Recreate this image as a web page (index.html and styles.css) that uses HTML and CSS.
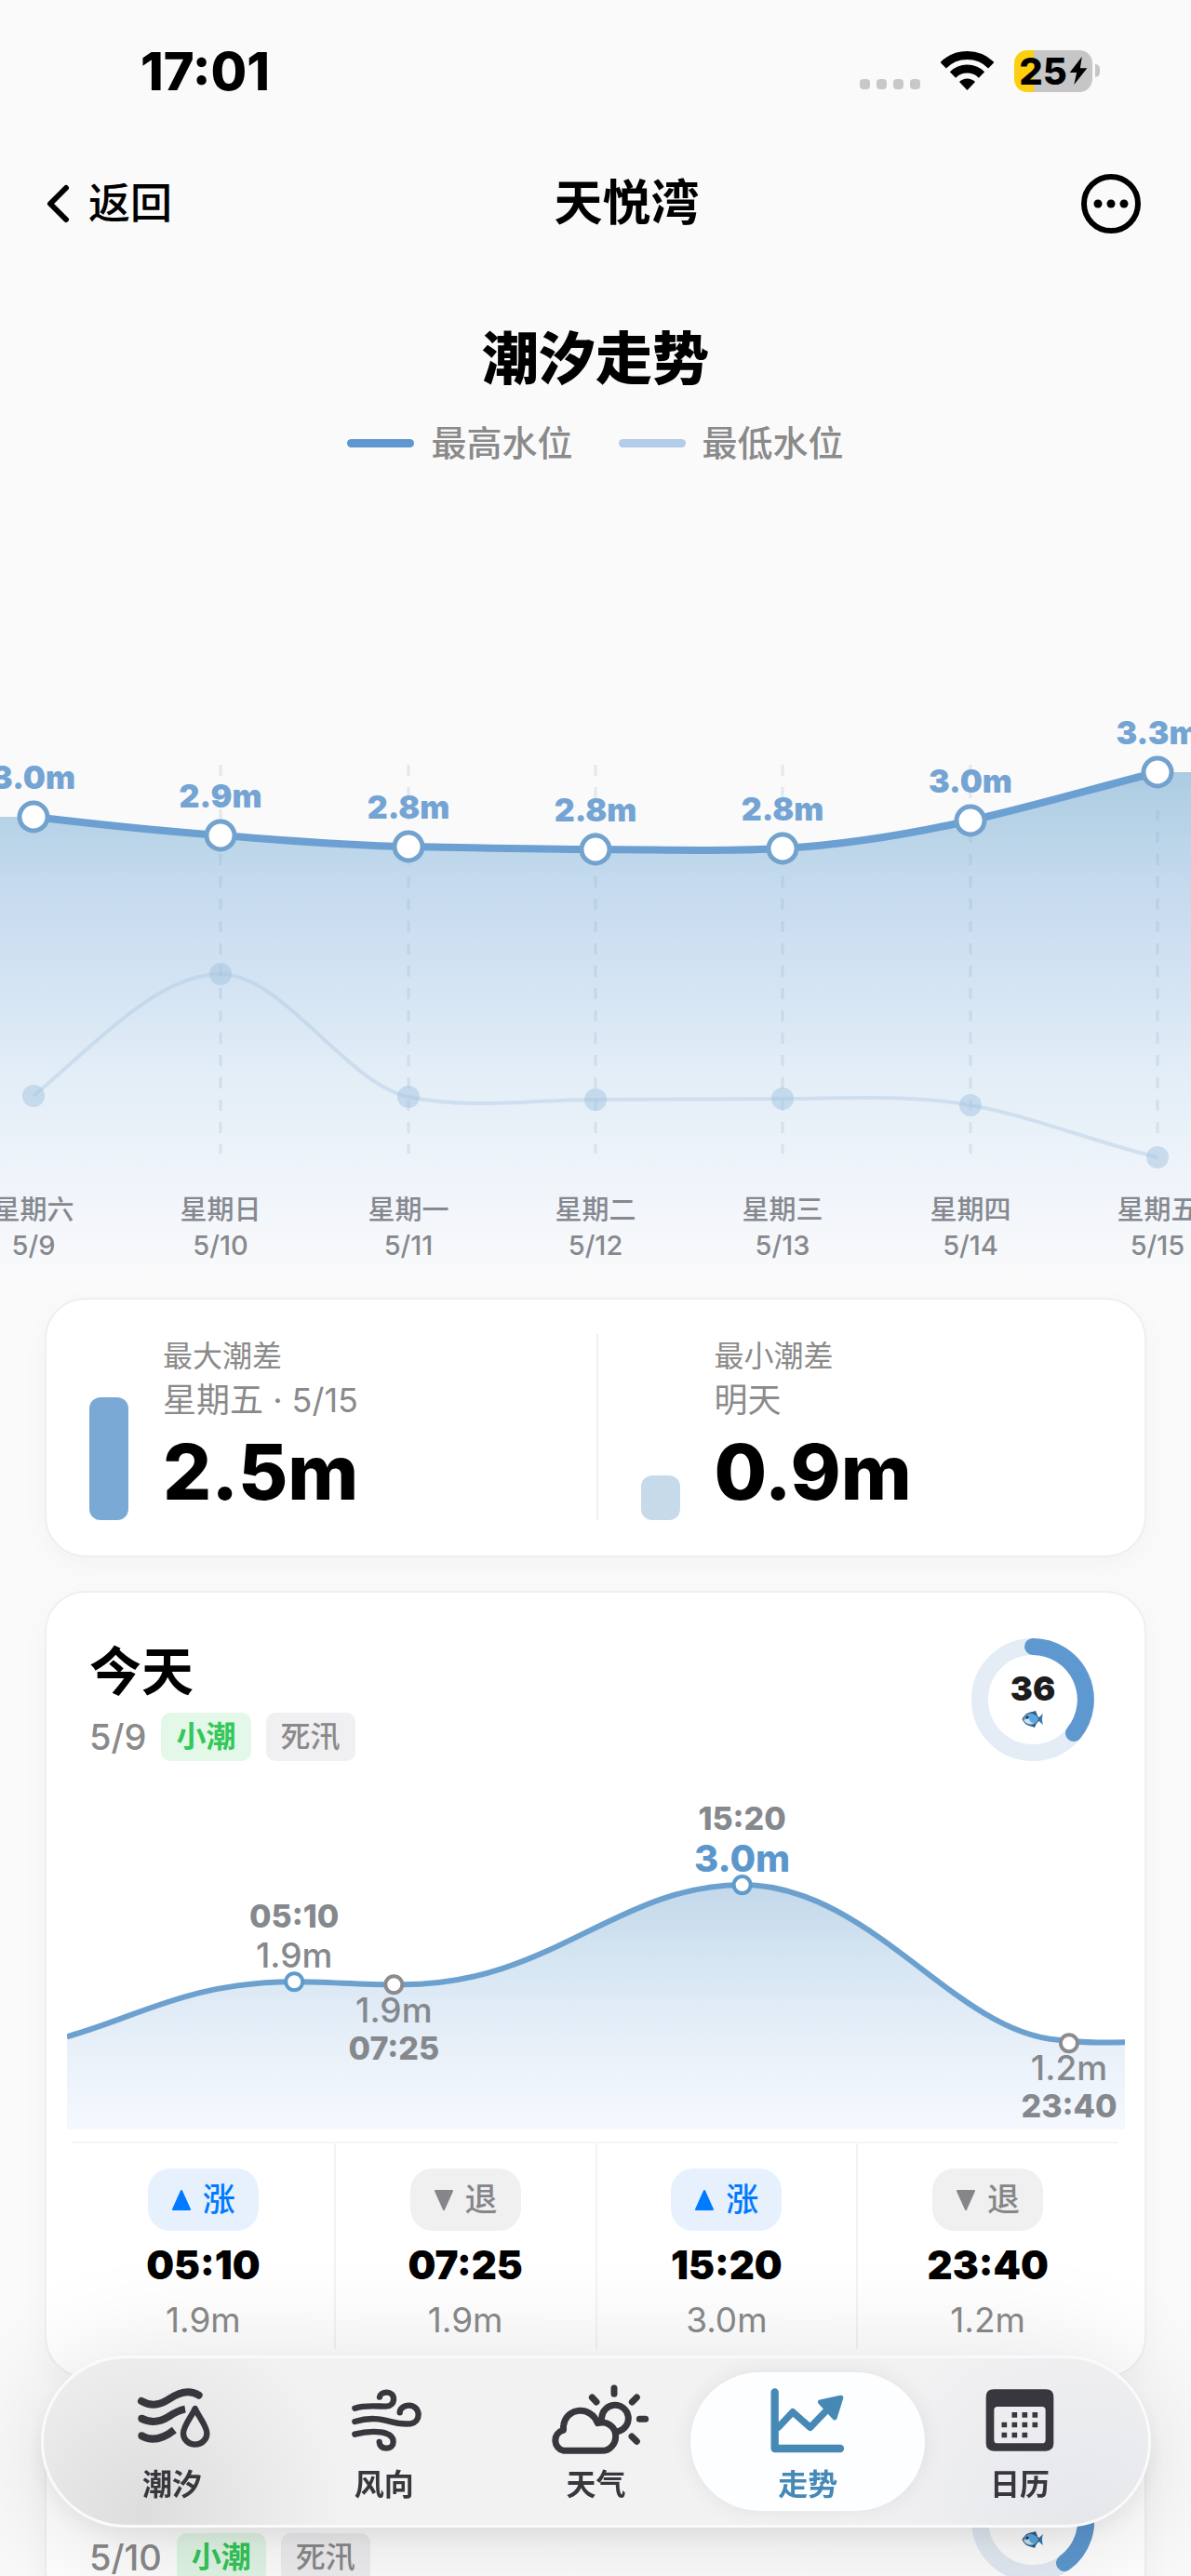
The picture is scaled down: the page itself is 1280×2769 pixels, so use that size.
FILE: index.html
```html
<!DOCTYPE html>
<html lang="zh-CN">
<head>
  <meta charset="UTF-8" />
  <meta name="viewport" content="width=device-width, initial-scale=1.0"/>
  <title>天悦湾</title>
  <link rel="stylesheet" href="styles.css">
</head>
<body>

<div class="app">
  <div class="status-bar">
    <span class="clock">17:01</span>
    <div class="status-icons">
      <span class="cell-dots"><i></i><i></i><i></i><i></i></span>
      <svg class="wifi" viewBox="0 0 57 42">
        <path d="M2.700 15.200A36.500 36.500 0 0 1 54.300 15.200M13 25.500A22 22 0 0 1 44 25.500" fill="none" stroke="#000" stroke-width="9"/>
        <path d="M28.500 42L20 33A12 12 0 0 1 37 33Z"/>
      </svg>
      <span class="battery">25<svg viewBox="0 0 20 32"><path d="M14 0L0 18h8L5 32L20 13h-8Z"/></svg></span>
    </div>
  </div>

  <header class="nav-bar">
    <a class="back" href="#">
      <svg viewBox="0 0 26 42"><path d="M22 4L5 21L22 38" fill="none" stroke="#000" stroke-width="6" stroke-linecap="round" stroke-linejoin="round"/></svg>
      返回
    </a>
    <h1>天悦湾</h1>
    <button class="more" type="button" aria-label="更多">
      <svg viewBox="0 0 64 64">
        <circle cx="32" cy="32" r="29" fill="none" stroke="#000" stroke-width="6"/>
        <circle cx="18" cy="32" r="4.500"/><circle cx="32" cy="32" r="4.500"/><circle cx="46" cy="32" r="4.500"/>
      </svg>
    </button>
  </header>

  <main>
    <section class="trend">
      <h2>潮汐走势</h2>
      <div class="legend">
        <span class="key high">最高水位</span>
        <span class="key low">最低水位</span>
      </div>
      <svg class="trend-chart" viewBox="0 501 1280 874">
        <defs>
          <linearGradient id="sea" gradientUnits="userSpaceOnUse" x1="0" y1="830" x2="0" y2="1375">
            <stop offset="0" stop-color="#acccE3"/>
            <stop offset="0.120" stop-color="#b9d4e8"/>
            <stop offset="0.220" stop-color="#c5daee"/>
            <stop offset="0.420" stop-color="#d4e4f3"/>
            <stop offset="0.600" stop-color="#e3eef7"/>
            <stop offset="0.800" stop-color="#eff4fa"/>
            <stop offset="1" stop-color="#fafafb"/>
          </linearGradient>
        </defs>
        <path fill="url(#sea)" d="M0 878H36C103 886 170 893 237 898S372 909 439 910S573 913 640 913S774 916 841 912S976 897 1043 882S1177 847 1244 830H1280V1375H0Z"/>
        <path class="grid-line" d="M237 822V1240M439 822V1240M640 822V1240M841 822V1240M1043 822V1240M1244 870V1230"/>
        <path class="low-line" d="M36 1178C103 1122 170 1047 237 1047S372 1165 439 1179S573 1182 640 1182S774 1181 841 1181S976 1176 1043 1188S1177 1228 1244 1244"/>
        <g class="low-dots">
          <circle cx="36" cy="1178" r="12"/><circle cx="237" cy="1047" r="12"/><circle cx="439" cy="1179" r="12"/><circle cx="640" cy="1182" r="12"/><circle cx="841" cy="1181" r="12"/><circle cx="1043" cy="1188" r="12"/><circle cx="1244" cy="1244" r="12"/>
        </g>
        <path class="high-line" d="M36 878C103 886 170 893 237 898S372 909 439 910S573 913 640 913S774 916 841 912S976 897 1043 882S1177 847 1244 830"/>
        <g class="high-dots">
          <circle cx="36" cy="878" r="15"/><circle cx="237" cy="898" r="15"/><circle cx="439" cy="910" r="15"/><circle cx="640" cy="913" r="15"/><circle cx="841" cy="912" r="15"/><circle cx="1043" cy="882" r="15"/><circle cx="1244" cy="830" r="15"/>
        </g>
        <g class="high-text">
          <text x="36" y="848">3.0m</text><text x="237" y="868">2.9m</text><text x="439" y="880">2.8m</text><text x="640" y="883">2.8m</text><text x="841" y="882">2.8m</text><text x="1043" y="852">3.0m</text><text x="1244" y="800">3.3m</text>
        </g>
        <g class="day-text">
          <text x="36" y="1311">星期六</text><text x="237" y="1311">星期日</text><text x="439" y="1311">星期一</text><text x="640" y="1311">星期二</text><text x="841" y="1311">星期三</text><text x="1043" y="1311">星期四</text><text x="1244" y="1311">星期五</text>
          <text x="36" y="1349">5/9</text><text x="237" y="1349">5/10</text><text x="439" y="1349">5/11</text><text x="640" y="1349">5/12</text><text x="841" y="1349">5/13</text><text x="1043" y="1349">5/14</text><text x="1244" y="1349">5/15</text>
        </g>
      </svg>
    </section>

    <section class="card range">
      <div class="range-item">
        <span class="bar max"></span>
        <div class="range-text">
          <p class="range-label">最大潮差</p>
          <p class="range-day">星期五 · 5/15</p>
          <p class="range-value">2.5m</p>
        </div>
      </div>
      <div class="range-item">
        <span class="bar min"></span>
        <div class="range-text">
          <p class="range-label">最小潮差</p>
          <p class="range-day">明天</p>
          <p class="range-value">0.9m</p>
        </div>
      </div>
    </section>

    <section class="card day">
      <div class="day-head">
        <div>
          <h3>今天</h3>
          <div class="day-meta">
            <span class="date">5/9</span>
            <span class="tag green">小潮</span>
            <span class="tag">死汛</span>
          </div>
        </div>
        <div class="score">
          <svg class="ring" viewBox="0 0 132 132">
            <circle cx="66" cy="66" r="57" fill="none" stroke="#e4ecf6" stroke-width="18"/>
            <path d="M66 9A57 57 0 0 1 110 102" fill="none" stroke="#5d98d0" stroke-width="18" stroke-linecap="round"/>
          </svg>
          <div class="score-text">
            <b>36</b>
            <svg class="fish" viewBox="0 0 24 20">
              <path d="M16 10L23 4Q21 10 23 16Z" fill="#3a78b5"/>
              <path d="M8 3L15 1L17 6ZM9 17L14 19L16 14Z" fill="#2f5f94"/>
              <path d="M1 10Q4 3 11 3Q17 5 19 10Q17 15 11 17Q4 17 1 10Z" fill="#5aa7dd" stroke="#33485f"/>
              <path d="M2 11Q6 17 14 14Q8 14 8 9Z" fill="#c8e3f3"/>
              <circle cx="6" cy="8" r="1.500" fill="#1f2b38"/>
            </svg>
          </div>
        </div>
      </div>

      <svg class="day-chart" viewBox="72 1894 1136 396">
        <defs>
          <linearGradient id="tide" gradientUnits="userSpaceOnUse" x1="0" y1="2027" x2="0" y2="2290">
            <stop offset="0" stop-color="#c3d8ea"/>
            <stop offset="0.400" stop-color="#dbe9f5"/>
            <stop offset="0.700" stop-color="#eaf1f9"/>
            <stop offset="1" stop-color="#f5f9ff"/>
          </linearGradient>
        </defs>
        <path fill="url(#tide)" d="M72 2190C150 2168 205 2131 316 2131C352 2131 385 2134 423 2134C590 2138 660 2027 797 2027C940 2027 1030 2196 1148 2194Q1160 2197 1208 2196V2290H72Z"/>
        <path class="tide-line" d="M72 2190C150 2168 205 2131 316 2131C352 2131 385 2134 423 2134C590 2138 660 2027 797 2027C940 2027 1030 2196 1148 2194Q1160 2197 1208 2196"/>
        <g class="rise-dots"><circle cx="316" cy="2131" r="9"/><circle cx="797" cy="2027" r="9"/></g>
        <g class="fall-dots"><circle cx="423" cy="2134" r="9"/><circle cx="1148" cy="2197" r="9"/></g>
        <g class="tide-text">
          <text class="t" x="316" y="2073">05:10</text><text x="316" y="2116">1.9m</text>
          <text x="423" y="2175">1.9m</text><text class="t" x="423" y="2215">07:25</text>
          <text class="t" x="797" y="1968">15:20</text><text class="peak" x="797" y="2013">3.0m</text>
          <text x="1148" y="2237">1.2m</text><text class="t" x="1148" y="2277">23:40</text>
        </g>
      </svg>

      <ul class="events">
        <li><span class="pill rise"><svg viewBox="0 0 22 24"><path d="M11 2L20 22H2Z"/></svg>涨</span><b>05:10</b><span class="depth">1.9m</span></li>
        <li><span class="pill"><svg viewBox="0 0 22 24"><path d="M2 2H20L11 22Z"/></svg>退</span><b>07:25</b><span class="depth">1.9m</span></li>
        <li><span class="pill rise"><svg viewBox="0 0 22 24"><path d="M11 2L20 22H2Z"/></svg>涨</span><b>15:20</b><span class="depth">3.0m</span></li>
        <li><span class="pill"><svg viewBox="0 0 22 24"><path d="M2 2H20L11 22Z"/></svg>退</span><b>23:40</b><span class="depth">1.2m</span></li>
      </ul>
    </section>

    <section class="card day">
      <div class="day-head next">
        <div class="day-meta">
          <span class="date">5/10</span>
          <span class="tag green">小潮</span>
          <span class="tag">死汛</span>
        </div>
        <div class="score">
          <svg class="ring" viewBox="0 0 132 132">
            <circle cx="66" cy="66" r="57" fill="none" stroke="#e4ecf6" stroke-width="18"/>
            <path d="M66 9A57 57 0 0 1 100 112" fill="none" stroke="#5d98d0" stroke-width="18" stroke-linecap="round"/>
          </svg>
          <div class="score-text">
            <svg class="fish" viewBox="0 0 24 20">
              <path d="M16 10L23 4Q21 10 23 16Z" fill="#3a78b5"/>
              <path d="M8 3L15 1L17 6ZM9 17L14 19L16 14Z" fill="#2f5f94"/>
              <path d="M1 10Q4 3 11 3Q17 5 19 10Q17 15 11 17Q4 17 1 10Z" fill="#5aa7dd" stroke="#33485f"/>
              <path d="M2 11Q6 17 14 14Q8 14 8 9Z" fill="#c8e3f3"/>
              <circle cx="6" cy="8" r="1.500" fill="#1f2b38"/>
            </svg>
          </div>
        </div>
      </div>
    </section>
  </main>

  <nav class="tab-bar">
    <a href="#">
      <svg viewBox="-4 45 336 240" stroke-width="24">
        <path d="M65 105C98 124 125 117 155 98C190 74 222 68 250 86" stroke-linecap="round"/>
        <path d="M65 161C98 178 125 173 153 155C172 142 188 134 206 131"/>
        <path d="M65 217C95 234 128 232 171 198"/>
        <path d="M66 161h0M66 217h0" stroke-linecap="round"/>
        <path d="M238 129C230 150 200 184 200 209A38 36 0 0 0 276 209C276 184 246 150 238 129Z" stroke-width="19" stroke-linejoin="round"/>
      </svg>
      潮汐
    </a>
    <a href="#">
      <svg viewBox="678 45 336 240" stroke-width="19" stroke-linecap="round">
        <path d="M751 128C790 116 830 123 852 122C867 121 876 112 876 98C876 86 866 77 854 77C841 77 832 84 831 92"/>
        <path d="M751 171C800 156 835 162 870 172C895 179 916 179 930 178C947 175 956 163 956 149C956 132 943 119 926 119C908 119 896 130 896 142"/>
        <path d="M751 212C795 200 835 203 852 209C867 214 875 223 875 236C875 248 866 257 853 257C839 257 831 250 830 237"/>
      </svg>
      风向
    </a>
    <a href="#">
      <svg viewBox="9 45 336 240" stroke-width="21" stroke-linecap="round">
        <path d="M197 158A43 43 0 1 1 252 202"/>
        <path d="M237 63V82M310 93L295 108M319 163H338M294 219L310 235M166 93L180 108"/>
        <path d="M75 265A34 34 0 0 1 72 199C76 198 72 191 74 183C82 125 162 118 184 176C218 168 242 190 242 218C242 245 222 265 199 265Z" stroke-linejoin="round"/>
      </svg>
      天气
    </a>
    <a href="#" class="active">
      <svg viewBox="693 45 336 240" stroke-width="25" stroke-linecap="round" stroke-linejoin="round">
        <path d="M755 76V258H966"/>
        <path d="M767 189L813 140L869 190L925 132" stroke-width="22"/>
        <path d="M902 108L968 94L948 158Z" fill="currentColor" stroke-width="16"/>
      </svg>
      走势
    </a>
    <a href="#">
      <svg viewBox="-168 45 336 240">
        <path d="M-84 67H84Q109 67 109 92V241Q109 266 84 266H-84Q-109 266-109 241V92Q-109 67-84 67ZM-72 123Q-83 123-83 134V230Q-83 241-72 241H72Q83 241 83 230V134Q83 123 72 123Z" fill="currentColor" stroke="none" fill-rule="evenodd"/>
        <path d="M-17 141v17M16 141v17M49 141v17M-50 173v17M-17 173v17M16 173v17M49 173v17M-50 206v17M-17 206v17M16 206v17" stroke-width="17"/>
      </svg>
      日历
    </a>
  </nav>
</div>

</body>
</html>
```
FILE: styles.css
```css
* {
  box-sizing: border-box;
}
body {
  margin: 0;
  background: #fafafa;
  color: #000;
  font-family: Inter, "Noto Sans CJK SC", sans-serif;
}
h1, h2, h3, p, ul {
  margin: 0;
  padding: 0;
}
svg {
  display: block;
}
a {
  color: inherit;
  text-decoration: none;
}
.app {
  height: 100vh;
  overflow: hidden;
}

/* status bar */
.status-bar {
  display: flex;
  align-items: center;
  justify-content: space-between;
  height: 154px;
  padding: 0 98px 0 151px;
}
.clock {
  font-size: 56px;
  font-weight: 800;
}
.status-icons {
  display: flex;
  align-items: center;
  gap: 22px;
  padding-bottom: 2px;
}
.cell-dots {
  display: flex;
  gap: 7px;
  padding-top: 28px;
}
.cell-dots i {
  width: 11px;
  height: 11px;
  border-radius: 4px;
  background: #c8c8ca;
}
.wifi {
  width: 57px;
  height: 42px;
}
.battery {
  position: relative;
  display: flex;
  align-items: center;
  justify-content: center;
  gap: 2px;
  width: 84px;
  height: 45px;
  margin-right: 8px;
  border-radius: 14px;
  background: linear-gradient(90deg, #fdd00f 25%, #c6c6c6 25%);
  font-size: 40px;
  font-weight: 800;
}
.battery::after {
  content: "";
  position: absolute;
  right: -8px;
  width: 5px;
  height: 14px;
  border-radius: 0 5px 5px 0;
  background: #c6c6c6;
}
.battery svg {
  width: 20px;
  height: 30px;
}

/* navigation */
.nav-bar {
  display: flex;
  align-items: center;
  justify-content: space-between;
  height: 130px;
  padding: 0 54px 0 49px;
}
.back {
  display: flex;
  align-items: center;
  gap: 20px;
  font-size: 45px;
  font-weight: 500;
  line-height: 64px;
}
.back svg {
  width: 26px;
  height: 42px;
}
.nav-bar h1 {
  font-size: 52px;
  font-weight: 700;
  line-height: 64px;
}
.more {
  padding: 0;
  border: none;
  background: none;
  cursor: pointer;
}
.more svg {
  width: 64px;
  height: 64px;
}

/* weekly trend */
.trend {
  padding-top: 62px;
}
.trend h2 {
  font-size: 61px;
  font-weight: 900;
  line-height: 80px;
  text-align: center;
}
.legend {
  display: flex;
  justify-content: center;
  gap: 49px;
  margin-top: 25px;
  line-height: 50px;
}
.key {
  display: flex;
  align-items: center;
  gap: 18px;
  color: #8a8a8a;
  font-size: 38px;
  font-weight: 500;
}
.key::before {
  content: "";
  width: 72px;
  height: 9px;
  border-radius: 5px;
  background: #5f98ce;
}
.key.low::before {
  background: #b3cde8;
}
.trend-chart {
  width: 100%;
  height: auto;
}
.grid-line {
  stroke: #8fa8c0;
  stroke-opacity: 0.22;
  stroke-width: 3;
  stroke-dasharray: 12 12;
}
.low-line {
  fill: none;
  stroke: #a9c6e2;
  stroke-opacity: 0.4;
  stroke-width: 4;
}
.low-dots {
  fill: #a3c4e0;
  fill-opacity: 0.5;
}
.high-line {
  fill: none;
  stroke: #6c9fd2;
  stroke-width: 8;
}
.high-dots {
  fill: #fff;
  stroke: #72a2ce;
  stroke-width: 5;
}
.high-text {
  fill: #74a4d3;
  font-size: 34px;
  font-weight: 900;
  text-anchor: middle;
}
.day-text {
  fill: #85898f;
  font-size: 29px;
  font-weight: 500;
  text-anchor: middle;
}

/* cards */
.card {
  margin: 0 48px 36px;
  border: 2px solid #efeff1;
  border-radius: 44px;
  background: #fff;
  box-shadow: 0 8px 30px rgba(0,0,0,0.03);
}
.range {
  display: grid;
  grid-template-columns: 1fr 1fr;
  margin-top: 20px;
  padding: 37px 45px 38px 46px;
}
.range-item {
  display: flex;
  align-items: flex-end;
  gap: 37px;
}
.range-item + .range-item {
  padding-left: 46px;
  border-left: 2px solid #f0f0f2;
}
.bar {
  width: 42px;
  border-radius: 12px;
}
.bar.max {
  height: 132px;
  background: #7ba9d5;
}
.bar.min {
  height: 48px;
  background: #c6daea;
}
.range-text {
  padding-bottom: 10px;
  color: #8a8a8a;
}
.range-label {
  font-size: 32px;
  line-height: 48px;
}
.range-day {
  font-size: 36px;
  line-height: 46px;
}
.range-value {
  margin-top: 14px;
  color: #000;
  font-size: 82px;
  font-weight: 800;
  line-height: 82px;
}

/* day card */
.day {
  padding: 49px 0 29px;
}
.day-head {
  display: flex;
  justify-content: space-between;
  padding: 0 54px 0 46px;
}
.day-head h3 {
  font-size: 56px;
  font-weight: 700;
  line-height: 72px;
}
.day-meta {
  display: flex;
  align-items: center;
  gap: 16px;
  margin-top: 8px;
}
.date {
  color: #8a8a8a;
  font-size: 38px;
  font-weight: 500;
}
.tag {
  padding: 0 16px;
  border-radius: 10px;
  background: #f0f0f2;
  color: #8a8a8a;
  font-size: 32px;
  font-weight: 500;
  line-height: 52px;
}
.tag.green {
  background: #e3f8e8;
  color: #34c759;
  font-weight: 700;
}
.score {
  display: grid;
  place-items: center;
  width: 132px;
  height: 132px;
}
.ring, .score-text {
  grid-area: 1 / 1;
}
.score-text {
  display: flex;
  flex-direction: column;
  align-items: center;
  gap: 4px;
  color: #1c1c1e;
  font-size: 36px;
  font-weight: 700;
  line-height: 38px;
}
.day-head.next {
  align-items: flex-end;
}
.next .score-text {
  padding-top: 42px;
}
.fish {
  width: 24px;
  height: 20px;
}
.day-chart {
  width: calc(100% - 43px);
  height: auto;
  margin: 0 21px 0 22px;
}
.tide-line {
  fill: none;
  stroke: #6ca1cf;
  stroke-width: 6;
}
.rise-dots, .fall-dots {
  fill: #fff;
  stroke: #5f9bcb;
  stroke-width: 4;
}
.fall-dots {
  stroke: #8c8c8e;
}
.tide-text {
  fill: #85888d;
  font-size: 37px;
  font-weight: 500;
  text-anchor: middle;
}
.tide-text .t {
  font-size: 34px;
  font-weight: 800;
}
.tide-text .peak {
  fill: #5b97cb;
  font-size: 40px;
  font-weight: 800;
}
.events {
  display: grid;
  grid-template-columns: repeat(4, 1fr);
  margin: 13px 29px 0 28px;
  border-top: 2px solid #f7f4f6;
  list-style: none;
}
.events li {
  display: flex;
  flex-direction: column;
  align-items: center;
  padding: 27px 0 9px;
}
.events li + li {
  border-left: 2px solid #f3f3f4;
}
.events b {
  margin-top: 12px;
  font-size: 42px;
  font-weight: 900;
  line-height: 50px;
}
.pill {
  display: flex;
  align-items: center;
  gap: 12px;
  padding: 0 25px;
  border-radius: 24px;
  background: #f0f0f0;
  color: #86868a;
  font-size: 35px;
  font-weight: 500;
  line-height: 67px;
}
.pill.rise {
  background: #e6f1fd;
  color: #007aff;
}
.pill svg {
  width: 22px;
  height: 24px;
  fill: currentColor;
  stroke: currentColor;
  stroke-width: 2;
  stroke-linejoin: round;
}
.depth {
  margin-top: 12px;
  color: #8a8a8a;
  font-size: 37px;
  line-height: 44px;
}

/* floating tab bar */
.tab-bar {
  position: fixed;
  left: 44px;
  right: 43px;
  bottom: 52px;
  display: grid;
  grid-template-columns: repeat(5, 1fr);
  padding: 15px 24px;
  border: 3px solid #fafafa;
  border-radius: 92px;
  background:
    radial-gradient(circle at 9% 92%, rgba(212,212,213,0.7), rgba(212,212,213,0) 20%),
    radial-gradient(circle at 94% 100%, rgba(224,226,232,0.7), rgba(224,226,232,0) 22%),
    #f2f2f3;
  box-shadow: 0 10px 24px rgba(0,0,0,0.06), 0 16px 130px rgba(0,0,0,0.14);
}
.tab-bar a {
  display: flex;
  flex-direction: column;
  align-items: center;
  height: 149px;
  padding-top: 11px;
  border-radius: 75px;
  color: #38373d;
  font-size: 32px;
  font-weight: 700;
  line-height: 60px;
}
.tab-bar svg {
  width: 112px;
  height: 80px;
  overflow: visible;
  fill: none;
  stroke: currentColor;
}
.tab-bar .active {
  margin: 0 -12px;
  background: #fdfeff;
  color: #4688b6;
  box-shadow: 0 0 24px rgba(0,0,0,0.07);
}
```
